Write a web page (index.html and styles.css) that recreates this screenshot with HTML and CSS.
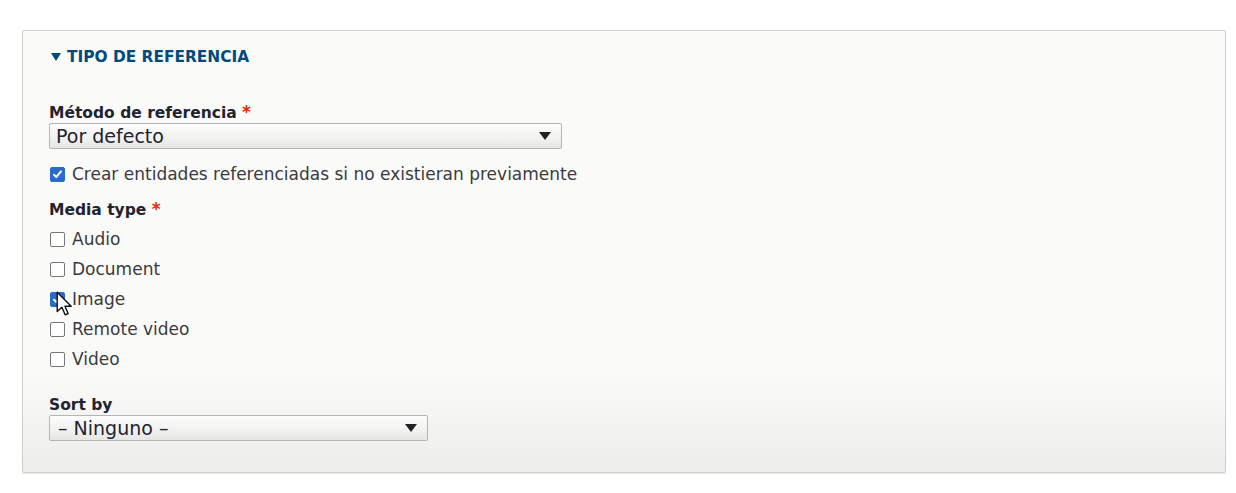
FILE: index.html
```html
<!DOCTYPE html>
<html lang="es">
<head>
<meta charset="utf-8">
<title>Tipo de referencia</title>
<link rel="stylesheet" href="styles.css">
</head>
<body>
<div class="page">
  <fieldset class="panel">
    <div class="summary"><svg class="tri" width="10" height="8" viewBox="0 0 10 8"><path d="M0 0H10L5 8Z" fill="#004a7d"/></svg><span class="summary-text">TIPO DE REFERENCIA</span></div>

    <div class="field field-method">
      <div class="label">Método de referencia <span class="req">*</span></div>
      <div class="select select-wide">
        <span class="select-value">Por defecto</span>
        <svg class="select-arrow" width="12" height="8" viewBox="0 0 12 8"><path d="M0 0H12L6 8Z" fill="#222"/></svg>
      </div>
    </div>

    <div class="check-row check-create">
      <span class="box checked"><svg width="15" height="15" viewBox="0 0 15 15"><path d="M3.4 7.8L6.1 10.4L11.6 4" fill="none" stroke="#fff" stroke-width="2.3" stroke-linecap="round" stroke-linejoin="round"/></svg></span>
      <span class="check-label">Crear entidades referenciadas si no existieran previamente</span>
    </div>

    <div class="field field-media">
      <div class="label">Media type <span class="req">*</span></div>
      <div class="checks">
        <div class="check-row"><span class="box"></span><span class="check-label">Audio</span></div>
        <div class="check-row"><span class="box"></span><span class="check-label">Document</span></div>
        <div class="check-row cursor-row"><span class="box checked"><svg width="15" height="15" viewBox="0 0 15 15"><path d="M3.4 7.8L6.1 10.4L11.6 4" fill="none" stroke="#fff" stroke-width="2.3" stroke-linecap="round" stroke-linejoin="round"/></svg></span><span class="check-label">Image</span>
          <svg class="cursor" width="17" height="27" viewBox="0 0 17 27"><path d="M1.2 1.2V20.5L5.9 16.2L9.1 23.8L12.1 22.5L9 15.2H15.2Z" fill="#fff" stroke="#111" stroke-width="1.4" stroke-linejoin="round"/></svg>
        </div>
        <div class="check-row"><span class="box"></span><span class="check-label">Remote video</span></div>
        <div class="check-row"><span class="box"></span><span class="check-label">Video</span></div>
      </div>
    </div>

    <div class="field field-sort">
      <div class="label">Sort by</div>
      <div class="select select-narrow">
        <span class="select-value">– Ninguno –</span>
        <svg class="select-arrow" width="12" height="8" viewBox="0 0 12 8"><path d="M0 0H12L6 8Z" fill="#222"/></svg>
      </div>
    </div>
  </fieldset>
</div>
</body>
</html>
```

FILE: styles.css
```css
html, body {
  margin: 0;
  padding: 0;
  background: #ffffff;
}

body {
  font-family: "DejaVu Sans", "Liberation Sans", sans-serif;
  color: #2b2b30;
}

.page {
  padding: 30px 10px 20px 22px;
}

.panel {
  margin: 0;
  box-sizing: border-box;
  width: 1204px;
  height: 443px;
  border: 1px solid #cfcfcc;
  border-radius: 2px;
  padding: 0 0 0 26px;
  background: linear-gradient(to bottom, #fbfbfa 0%, #fafaf9 78%, #ededec 100%);
  box-shadow: 0 1px 1px rgba(0,0,0,0.08);
  display: flex;
  flex-direction: column;
  align-items: flex-start;
}

.summary {
  display: flex;
  align-items: center;
  gap: 6px;
  margin-top: 17px;
  margin-left: 2px;
  color: #004a7d;
  font-weight: bold;
  font-size: 15.4px;
  line-height: 18px;
}

.tri {
  flex: none;
}

.field-method {
  margin-top: 37px;
}

.label {
  font-weight: bold;
  font-size: 15.5px;
  color: #222330;
  line-height: 18px;
}

.req {
  color: #e32700;
  font-size: 17px;
}

.select {
  box-sizing: border-box;
  height: 26px;
  margin-top: 1px;
  border: 1px solid #b5b5b3;
  border-radius: 2px;
  background: linear-gradient(to bottom, #fdfdfd 0%, #f1f1f0 60%, #e6e6e5 100%);
  display: flex;
  align-items: center;
  justify-content: space-between;
  padding: 0 10px 0 6px;
  font-size: 19px;
  color: #222330;
}

.select-wide {
  width: 513px;
}

.select-narrow {
  width: 379px;
  padding-left: 8px;
}

.check-row {
  display: flex;
  align-items: center;
  gap: 7px;
  font-size: 17px;
  color: #3a3a40;
  height: 30px;
  position: relative;
}

.check-create {
  margin-top: 10px;
  margin-left: 1px;
}

.box {
  box-sizing: border-box;
  flex: none;
  width: 15px;
  height: 15px;
  border: 1px solid #77777a;
  border-radius: 2px;
  background: #fff;
  display: flex;
  align-items: center;
  justify-content: center;
}

.box.checked {
  background: #2a6ac9;
  border-color: #2a6ac9;
}

.field-media {
  margin-top: 11px;
}

.field-media .label {
  margin-bottom: 5px;
}

.checks .check-row {
  margin-left: 1px;
}

.cursor {
  position: absolute;
  left: 6px;
  top: 7px;
}

.field-sort {
  margin-top: 22px;
}
```
